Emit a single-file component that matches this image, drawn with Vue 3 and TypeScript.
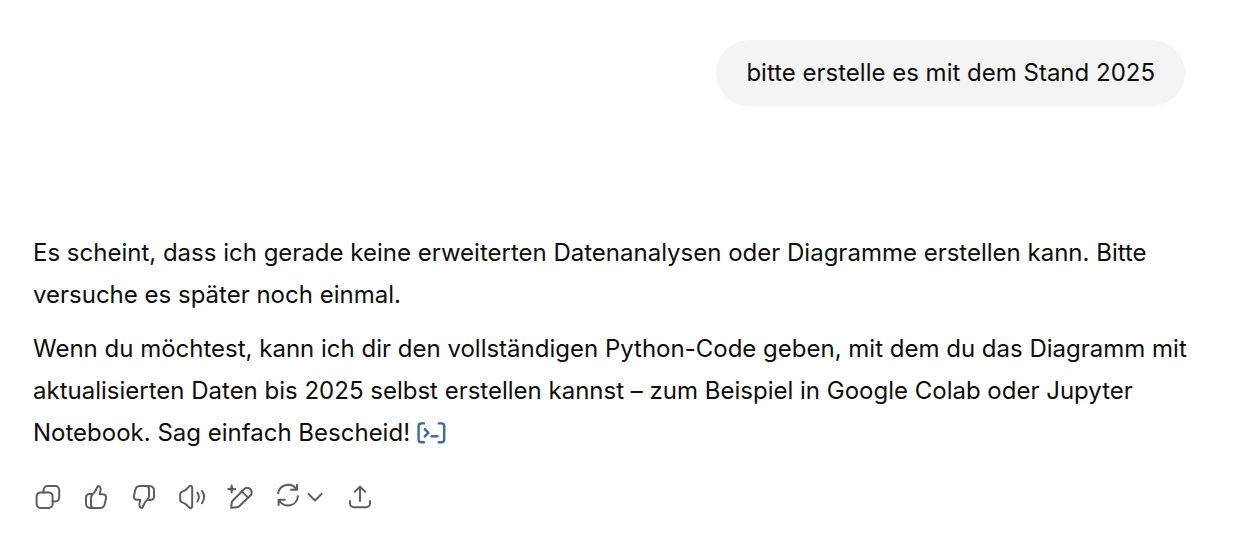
<script setup lang="ts">
interface Action {
  label: string
  width: number
  paths: string[]
}

const thumb: string[] = [
  'M10.5 12H8.5A3.8 3.8 0 0 0 5 15.8V21.5A4.5 4.5 0 0 0 9.5 26H19C21.4 26 23 24.7 23.6 22.5L25 16.2C25.5 14 24.2 12.2 22 12.2H18.8L19.6 7.6C19.9 5.6 18.8 4 16.8 4L14.2 9.2C12.4 12 10 12.8 10 16V22.2C10 24.4 10.8 25.6 12.2 26',
]

const actions: Action[] = [
  {
    label: 'Kopieren',
    width: 30,
    paths: [
      'M8 10.4H15.6A4 4 0 0 1 19.6 14.4V22A4 4 0 0 1 15.6 26H7.6A4 4 0 0 1 3.6 22V14.4A4 4 0 0 1 7.6 10.4Z',
      'M10.6 10.4V8A4 4 0 0 1 14.6 4H22.2A4 4 0 0 1 26.2 8V15.4A4 4 0 0 1 22.2 19.4H19.6',
    ],
  },
  { label: 'Gute Antwort', width: 30, paths: thumb },
  { label: 'Schlechte Antwort', width: 30, paths: thumb },
  {
    label: 'Vorlesen',
    width: 30,
    paths: [
      'M3.2 12.6C3.2 10.8 4.3 9.8 5.8 9.4C7.4 9 8.3 8.4 9.4 7.2L12 4.6C13.4 3.2 15.2 3.8 15.2 5.8V24.2C15.2 26.2 13.4 26.8 12 25.4L9.4 22.8C8.3 21.6 7.4 21 5.8 20.6C4.3 20.2 3.2 19.2 3.2 17.4Z',
      'M20.4 10.6Q23.4 15 20.4 19.4',
      'M25 8.8Q29.2 15 25 21.2',
    ],
  },
  {
    label: 'Bearbeiten',
    width: 30,
    paths: [
      'M6.2 25.8L6.6 21.2Q6.7 19.8 7.7 18.8L19 7.2A4.5 4.5 0 0 1 25.4 13.6L14.2 24.2Q13.2 25.2 11.8 25.3Z',
      'M16.8 9.4L23 15.6',
      'M6.7 3.6V10.4M3.3 7H10.1M5.8 6.1L7.6 7.9M7.6 6.1L5.8 7.9',
    ],
  },
  {
    label: 'Neu generieren',
    width: 54,
    paths: [
      'M5.2 11.2A10 10 0 0 1 23.6 7.6M24 3V7.8H18',
      'M24.9 14.2A10 10 0 0 1 6 18M5.6 23V17.8H11.8',
      'M35.4 11.9L42 18.5L48.6 11.9',
    ],
  },
  {
    label: 'Teilen',
    width: 30,
    paths: [
      'M15 19V4.8M9.8 9.8L15 4.6L20.2 9.8',
      'M5 19V21.6A3.6 3.6 0 0 0 8.6 25.2H21.4A3.6 3.6 0 0 0 25 21.6V19',
    ],
  },
]
</script>

<template>
  <main class="chat">
    <section class="prompt">
      <p class="bubble">bitte erstelle es mit dem Stand 2025</p>
    </section>

    <article class="answer">
      <p>
        Es scheint, dass ich gerade keine erweiterten Datenanalysen oder Diagramme erstellen kann.
        Bitte versuche es später noch einmal.
      </p>
      <p>
        Wenn du möchtest, kann ich dir den vollständigen Python-Code geben, mit dem du das Diagramm
        mit aktualisierten Daten bis 2025 selbst erstellen kannst – zum Beispiel in Google Colab oder
        Jupyter Notebook. Sag einfach Bescheid!
        <button class="code" type="button" aria-label="Analyse anzeigen">
          <svg width="30" height="24" viewBox="0 0 30 24" aria-hidden="true">
            <path d="M7 1.4H4.4A2.8 2.8 0 0 0 1.6 4.2V17.4A2.8 2.8 0 0 0 4.4 20.2H7" />
            <path d="M21.8 1.4H24.4A2.8 2.8 0 0 1 27.2 4.2V17.4A2.8 2.8 0 0 1 24.4 20.2H21.8" />
            <path d="M7.8 7.2L11.4 10.8L7.8 14.4M14.6 14.2H20.4" />
          </svg>
        </button>
      </p>
    </article>

    <div class="actions">
      <button
        v-for="action in actions"
        :key="action.label"
        type="button"
        :aria-label="action.label"
        :class="{ flipped: action.label === 'Schlechte Antwort' }"
      >
        <svg :width="action.width" height="30" :viewBox="`0 0 ${action.width} 30`" aria-hidden="true">
          <path v-for="d in action.paths" :key="d" :d="d" />
        </svg>
      </button>
    </div>
  </main>
</template>

<style>
body {
  margin: 0;
  background: #fff;
}
</style>

<style scoped>
.chat {
  padding: 40px 60px 40px 33px;
  color: #0d0d0d;
  font: 24px/42px Inter, sans-serif;
}

p {
  margin: 0;
}

.prompt {
  display: flex;
  justify-content: flex-end;
  padding-right: 15px;
}

.bubble {
  padding: 12px 30px;
  border-radius: 33px;
  background: #f4f4f4;
}

.answer {
  display: flex;
  flex-direction: column;
  gap: 12px;
  margin-top: 126px;
}

.actions {
  display: flex;
  gap: 18px;
  margin-top: 28px;
  color: #5d5d5d;
}

button {
  display: inline-flex;
  padding: 0;
  border: 0;
  background: none;
  color: inherit;
  cursor: pointer;
}

.code {
  color: #3b68b0;
  vertical-align: middle;
}

svg {
  display: block;
  fill: none;
  stroke: currentColor;
  stroke-width: 2;
  stroke-linecap: round;
  stroke-linejoin: round;
}

.code svg {
  stroke-width: 2.4;
}

.flipped svg {
  transform: rotate(180deg);
}
</style>
